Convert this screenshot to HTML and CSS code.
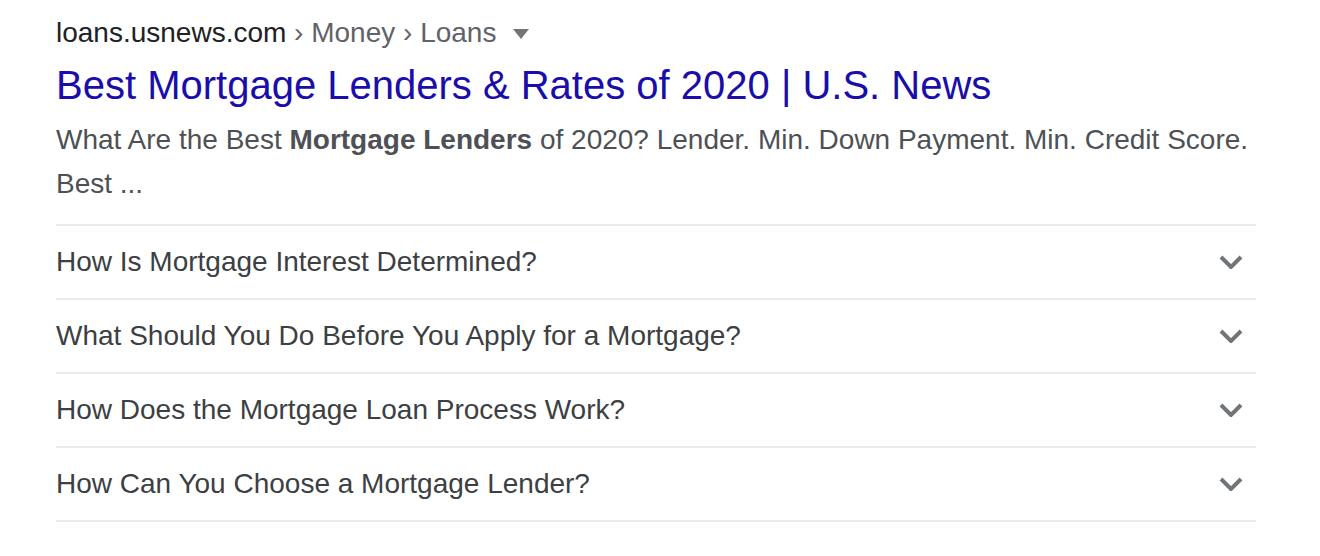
FILE: index.html
```html
<!DOCTYPE html>
<html lang="en">
<head>
    <meta charset="UTF-8">
    <meta name="viewport" content="width=device-width, initial-scale=1.0">
    <title>Best Mortgage Lenders &amp; Rates of 2020 | U.S. News</title>
    <link rel="stylesheet" href="styles.css">
</head>
<body>
    <div class="result">
        <div class="crumbs">
            <span class="domain">loans.usnews.com</span>
            <span class="path"> › Money › Loans</span>
            <span class="caret"></span>
        </div>

        <a class="title" href="#">Best Mortgage Lenders &amp; Rates of 2020 | U.S. News</a>

        <div class="snippet">
            What Are the Best <b>Mortgage Lenders</b> of 2020? Lender. Min. Down Payment. Min. Credit Score. Best ...
        </div>

        <!-- related questions -->
        <div class="faq">
            <div class="faq-row">
                <span>How Is Mortgage Interest Determined?</span>
                <svg class="chevron" width="24" height="14" viewBox="0 0 24 14"><polyline points="2,2 12,12 22,2"/></svg>
            </div>
            <div class="faq-row">
                <span>What Should You Do Before You Apply for a Mortgage?</span>
                <svg class="chevron" width="24" height="14" viewBox="0 0 24 14"><polyline points="2,2 12,12 22,2"/></svg>
            </div>
            <div class="faq-row">
                <span>How Does the Mortgage Loan Process Work?</span>
                <svg class="chevron" width="24" height="14" viewBox="0 0 24 14"><polyline points="2,2 12,12 22,2"/></svg>
            </div>
            <div class="faq-row">
                <span>How Can You Choose a Mortgage Lender?</span>
                <svg class="chevron" width="24" height="14" viewBox="0 0 24 14"><polyline points="2,2 12,12 22,2"/></svg>
            </div>
        </div>
    </div>
</body>
</html>
```

FILE: styles.css
```css
body {
    margin: 0;
    background: #fff;
    font-family: "Liberation Sans", Arial, sans-serif;
}

.result {
    width: 1200px;
    padding: 14px 0 0 56px;
}

/* breadcrumb */
.crumbs {
    font-size: 28px;
    line-height: 38px;
    display: flex;
    align-items: center;
    white-space: pre;
}
.domain { color: #202124; }
.path { color: #5f6368; }

.caret {
    width: 0;
    height: 0;
    margin-left: 17px;
    margin-top: 2px;
    border-left: 8px solid transparent;
    border-right: 8px solid transparent;
    border-top: 10px solid #70757a;
}

.title {
    display: block;
    margin-top: 7px;
    font-size: 40px;
    line-height: 52px;
    color: #1a0dab;
    text-decoration: none;
}

.snippet {
    margin-top: 7px;
    font-size: 28px;
    line-height: 44px;
    color: #4d5156;
}
.snippet b { color: #4d5156; }

/* questions */
.faq {
    margin-top: 18px;
    border-top: 2px solid #ebebeb;
}

.faq-row {
    height: 72px;
    display: flex;
    align-items: center;
    justify-content: space-between;
    padding-right: 13px;
    border-bottom: 2px solid #ebebeb;
    font-size: 28px;
    color: #3c4043;
}

.chevron {
    fill: none;
    stroke: #70757a;
    stroke-width: 4;
}
```
